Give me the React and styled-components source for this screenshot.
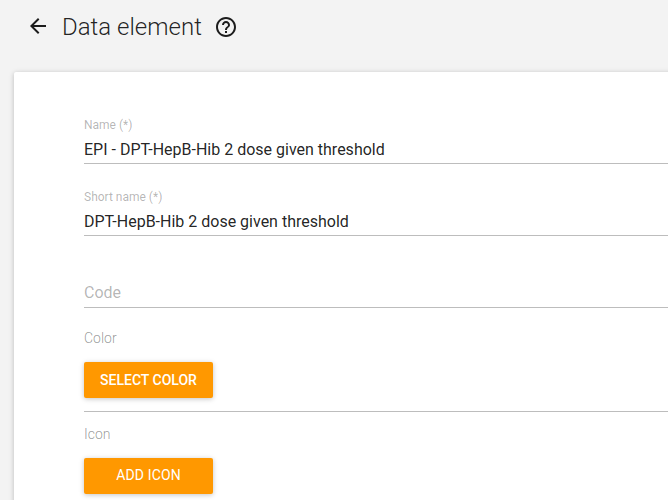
import React from "react";
import styled, { createGlobalStyle } from "styled-components";

const Global = createGlobalStyle`
  * { box-sizing: border-box; }
  body { margin: 0; background: #f3f3f3; font-family: Roboto, sans-serif; overflow: hidden; }
`;
const Page = styled.div`
  height: 500px;
  overflow: hidden;
`;
const Header = styled.header`
  height: 72px;
  padding: 14px 0 0 26px;
  display: flex;
  align-items: flex-start;
`;
const Icon = styled.svg`
  width: 24px;
  height: 24px;
  margin-top: ${(p) => p.$drop || 0}px;
  fill: #1c1c1c;
  flex: none;
`;
const Title = styled.h1`
  margin: -1px 12px 0 12px;
  font-size: 24px;
  font-weight: 300;
  line-height: 28px;
  color: rgba(0, 0, 0, 0.87);
  white-space: nowrap;
`;
const Card = styled.main`
  margin-left: 14px;
  width: 900px;
  height: 600px;
  padding: 40px 70px 0;
  background: #fff;
  border-radius: 2px;
  box-shadow: 0 1px 6px rgba(0, 0, 0, 0.12), 0 1px 4px rgba(0, 0, 0, 0.12);
`;
const Field = styled.div`
  height: ${(p) => p.$height}px;
  padding-top: ${(p) => p.$top}px;
  border-bottom: 1px solid #bdbdbd;
`;
const Label = styled.div`
  font-size: ${(p) => p.$size || 12}px;
  line-height: 16px;
  font-weight: ${(p) => p.$weight || 400};
  color: rgba(0, 0, 0, ${(p) => (p.$weight ? 0.42 : 0.3)});
`;
const Value = styled.div`
  margin-top: 7px;
  font-size: 16px;
  line-height: 20px;
  color: rgba(0, 0, 0, 0.87);
`;
const Button = styled.button`
  display: block;
  width: 129px;
  height: 36px;
  margin-top: 16px;
  padding: 0 0 ${(p) => p.$lift || 0}px;
  border: 0;
  border-radius: 2px;
  background: #ff9800;
  color: #fff;
  font: 500 14px/34px Roboto, sans-serif;
  box-shadow: 0 1px 6px rgba(0, 0, 0, 0.12), 0 1px 4px rgba(0, 0, 0, 0.12);
`;
const LightButton = styled(Button)`
  font-weight: 400;
  letter-spacing: 0.15px;
`;

export default function App() {
  return (
    <Page>
      <Global />
      <Header>
        <Icon viewBox="0 0 24 24"><path d="M20 11H7.83l5.59-5.59L12 4l-8 8 8 8 1.41-1.41L7.83 13H20v-2z" /></Icon>
        <Title>Data element</Title>
        <Icon $drop={0.7} viewBox="0 0 24 24"><path d="M11 18h2v-2h-2v2zm1-16C6.48 2 2 6.48 2 12s4.480 10 10 10 10-4.480 10-10S17.520 2 12 2zm0 18c-4.410 0-8-3.590-8-8s3.590-8 8-8 8 3.590 8 8-3.590 8-8 8zm0-14c-2.210 0-4 1.790-4 4h2c0-1.100.9-2 2-2s2 .9 2 2c0 2-3 1.750-3 5h2c0-2.250 3-2.500 3-5 0-2.210-1.790-4-4-4z" /></Icon>
      </Header>
      <Card>
        <Field $height={52} $top={5}>
          <Label>Name (*)</Label>
          <Value>EPI - DPT-HepB-Hib 2 dose given threshold</Value>
        </Field>
        <Field $height={72} $top={25}>
          <Label>Short name (*)</Label>
          <Value>DPT-HepB-Hib 2 dose given threshold</Value>
        </Field>
        <Field $height={72} $top={49}>
          <Label $size={16}>Code</Label>
        </Field>
        <Field $height={104} $top={22}>
          <Label $size={14} $weight={300}>Color</Label>
          <Button>SELECT COLOR</Button>
        </Field>
        <Field $height={104} $top={14}>
          <Label $size={14} $weight={300}>Icon</Label>
          <LightButton $lift={2}>ADD ICON</LightButton>
        </Field>
      </Card>
    </Page>
  );
}
